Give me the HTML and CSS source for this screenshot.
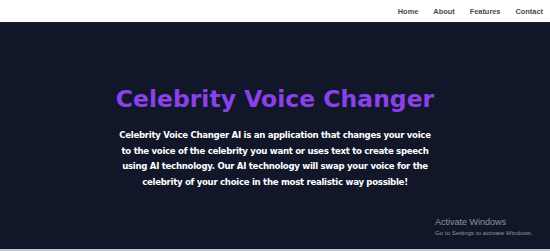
FILE: index.html
```html
<!DOCTYPE html>
<html lang="en">
<head>
<meta charset="utf-8">
<title>Celebrity Voice Changer</title>
<link rel="stylesheet" href="styles.css">
</head>
<body>
<header class="topbar">
  <nav class="nav">
    <a class="nav-link" href="#">Home</a>
    <a class="nav-link" href="#">About</a>
    <a class="nav-link" href="#">Features</a>
    <a class="nav-link" href="#">Contact</a>
  </nav>
</header>
<main class="hero">
  <h1 class="hero-title">Celebrity Voice Changer</h1>
  <p class="hero-text">Celebrity Voice Changer AI is an application that changes your voice to the voice of the celebrity you want or uses text to create speech using AI technology. Our AI technology will swap your voice for the celebrity of your choice in the most realistic way possible!</p>
  <div class="watermark">
    <div class="wm-title">Activate Windows</div>
    <div class="wm-sub">Go to Settings to activate Windows.</div>
  </div>
</main>
<div class="bottom-strip"></div>
</body>
</html>
```
FILE: styles.css
```css
html, body {
  margin: 0;
  padding: 0;
  height: 100%;
  overflow: hidden;
}
body {
  font-family: "DejaVu Sans", "Liberation Sans", sans-serif;
  background: #c3cad6;
  display: flex;
  flex-direction: column;
}
.topbar {
  height: 22px;
  background: #ffffff;
  border-bottom: 1px solid #1a1a24;
  display: flex;
  justify-content: flex-end;
  align-items: center;
  flex: none;
}
.nav {
  display: flex;
  gap: 15px;
  padding-right: 7px;
}
.nav-link {
  font-family: "Liberation Sans", Arial, sans-serif;
  font-weight: bold;
  font-size: 7.4px;
  color: #4a4a4a;
  text-decoration: none;
}
.hero {
  position: relative;
  height: 226px;
  flex: none;
  background: #111729;
  display: flex;
  flex-direction: column;
  align-items: center;
  box-sizing: border-box;
  padding-top: 62px;
}
.hero-title {
  margin: 0;
  font-family: "DejaVu Sans", sans-serif;
  font-weight: bold;
  font-size: 23.5px;
  line-height: 29px;
  color: #8b40ea;
}
.hero-text {
  margin: 14px 0 0;
  width: 318px;
  text-align: center;
  font-family: "DejaVu Sans", sans-serif;
  font-weight: bold;
  font-size: 8.6px;
  letter-spacing: -0.3px;
  line-height: 15.5px;
  color: #ffffff;
}
.watermark {
  position: absolute;
  left: 435px;
  top: 194px;
  color: #8f949d;
  font-family: "Liberation Sans", Arial, sans-serif;
}
.wm-title {
  font-size: 9px;
  line-height: 11px;
}
.wm-sub {
  font-size: 6.2px;
  line-height: 9px;
}
.bottom-strip {
  flex: 1;
  background: #c3cad6;
}
```
